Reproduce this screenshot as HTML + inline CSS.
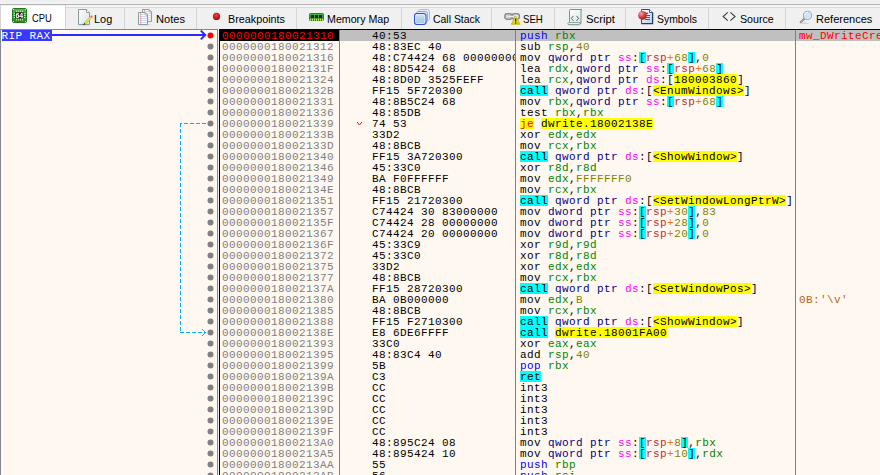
<!DOCTYPE html>
<html lang="en"><head><meta charset="utf-8"><title>x64dbg - CPU</title>
<style>

html,body{margin:0;padding:0}
body{width:880px;height:475px;overflow:hidden;position:relative;background:#f0f0f0;font-family:"Liberation Sans",sans-serif}
.abs{position:absolute}
#tabs{position:absolute;left:0;top:0;width:880px;height:29px}
.tab{position:absolute;top:7px;height:22px;background:#f0f0f0;border-top:1px solid #dadada;border-right:1px solid #d4d4d4;box-sizing:border-box}
.tab.sel{top:5px;height:24px;background:#fff;border-top:none;border-right:1px solid #d4d4d4;border-left:1px solid #d4d4d4}
.tl{position:absolute;font-size:11px;line-height:13px;color:#000;white-space:nowrap;transform-origin:0 0}
.mono{font-family:"Liberation Mono","DejaVu Sans Mono",monospace;font-size:11px;letter-spacing:0.4px;line-height:13px;white-space:pre}
#side{position:absolute;left:0;top:29px;width:218px;height:446px;box-sizing:border-box;background:#fff8f0;border:1px solid #828790;border-bottom:none;overflow:hidden}
#dis{position:absolute;left:219px;top:29px;width:661px;height:446px;background:#fff8f0;overflow:hidden}
.r{position:absolute;left:0;width:661px;height:11px}
.c{position:absolute;top:0;height:11px;clip-path:inset(0 0 -3px 0)}
.c span{display:inline-block;height:11px;vertical-align:top}
.t{position:absolute;top:0;left:0;height:11px}
.vl{position:absolute;top:0;width:1px;height:446px;background:#808080}

</style></head><body>
<div class="abs" style="left:0;top:3px;width:880px;height:1px;background:#f3f3f3"></div>
<div class="abs" style="left:0;top:4px;width:880px;height:1px;background:#b4b4b4"></div>
<div class="abs" style="left:65px;top:5px;width:815px;height:2px;background:#f5f5f5"></div>
<div id="tabs">
<div class="tab sel" style="left:0px;width:66px"></div>
<div class="tab" style="left:66px;width:59px"></div>
<div class="tab" style="left:125px;width:72px"></div>
<div class="tab" style="left:197px;width:100px"></div>
<div class="tab" style="left:297px;width:105px"></div>
<div class="tab" style="left:402px;width:90px"></div>
<div class="tab" style="left:492px;width:63px"></div>
<div class="tab" style="left:555px;width:71px"></div>
<div class="tab" style="left:626px;width:83px"></div>
<div class="tab" style="left:709px;width:77px"></div>
<div class="tab" style="left:786px;width:115px"></div>
<div class="tl" style="left:31.60px;top:12.00px;transform:scaleX(0.8522)">CPU</div>
<div class="tl" style="left:94.40px;top:13.00px;transform:scaleX(0.9913)">Log</div>
<div class="tl" style="left:155.60px;top:13.00px;transform:scaleX(1.0087)">Notes</div>
<div class="tl" style="left:227.60px;top:13.00px;transform:scaleX(0.9812)">Breakpoints</div>
<div class="tl" style="left:327.20px;top:13.00px;transform:scaleX(0.9690)">Memory Map</div>
<div class="tl" style="left:433.00px;top:13.00px;transform:scaleX(0.9489)">Call Stack</div>
<div class="tl" style="left:522.80px;top:13.00px;transform:scaleX(0.8751)">SEH</div>
<div class="tl" style="left:585.50px;top:13.00px;transform:scaleX(1.0240)">Script</div>
<div class="tl" style="left:656.70px;top:13.00px;transform:scaleX(0.9458)">Symbols</div>
<div class="tl" style="left:739.50px;top:13.00px;transform:scaleX(0.9696)">Source</div>
<div class="tl" style="left:816.40px;top:13.00px;transform:scaleX(1.0024)">References</div>
<div class="abs" style="left:1px;top:5px;width:64px;height:1px;background:#f2f2f2"></div>
<svg class="abs" style="left:0;top:0;will-change:transform" width="880" height="29" viewBox="0 0 880 29">
<defs>
<linearGradient id="gPage" x1="0" y1="0" x2="1" y2="1"><stop offset="0" stop-color="#ffffff"/><stop offset="1" stop-color="#d3e6e6"/></linearGradient>
<linearGradient id="gBlue" x1="0" y1="0" x2="0" y2="1"><stop offset="0" stop-color="#d4e2f4"/><stop offset="1" stop-color="#9dbce2"/></linearGradient>
<linearGradient id="gDoc" x1="0" y1="0" x2="1" y2="1"><stop offset="0" stop-color="#ffffff"/><stop offset="1" stop-color="#bccdee"/></linearGradient>
<radialGradient id="gRed" cx="0.35" cy="0.3" r="0.75"><stop offset="0" stop-color="#f2a7a0"/><stop offset="0.55" stop-color="#d2403c"/><stop offset="1" stop-color="#a81c1c"/></radialGradient>
<radialGradient id="gBp" cx="0.45" cy="0.35" r="0.7"><stop offset="0" stop-color="#e44a4a"/><stop offset="0.6" stop-color="#d01212"/><stop offset="1" stop-color="#9c0c0c"/></radialGradient>
<linearGradient id="gGreen" x1="0" y1="0" x2="0" y2="1"><stop offset="0" stop-color="#4cb64c"/><stop offset="1" stop-color="#1f8a1f"/></linearGradient>
<linearGradient id="gWarn" x1="0" y1="0" x2="0" y2="1"><stop offset="0" stop-color="#f6ee7a"/><stop offset="1" stop-color="#d6c80a"/></linearGradient>
</defs>
<!-- CPU chip -->
<g>
<rect x="12.5" y="8.5" width="14" height="14" rx="1.2" fill="url(#gGreen)" stroke="#1c7a22" stroke-width="1"/>
<g stroke="#e8d98a" stroke-width="1">
<path d="M16.5 10.5v2M18.5 10.5v2M20.5 10.5v2M22.5 10.5v2M16.5 18.5v2M18.5 18.5v2M20.5 18.5v2M22.5 18.5v2"/>
<path d="M13.5 13.5h2M13.5 15.5h2M13.5 17.5h2M23.5 13.5h2M23.5 15.5h2M23.5 17.5h2"/>
</g>
<g fill="#e8d98a"><rect x="13" y="9" width="1" height="1"/><rect x="25" y="9" width="1" height="1"/><rect x="13" y="21" width="1" height="1"/><rect x="25" y="21" width="1" height="1"/></g>
<rect x="15" y="12.3" width="8.700" height="6.200" rx="0.800" fill="#222222"/>
<text x="19.35" y="17.9" font-family="Liberation Sans, sans-serif" font-size="7" font-weight="bold" fill="#ffffff" text-anchor="middle">64</text>
</g>
<!-- Log: page + pencil -->
<g>
<ellipse cx="84" cy="24.700" rx="6.500" ry="0.800" fill="#000" opacity="0.160"/>
<path d="M78.500 9.500H86.500L89.500 12.500V24.500H78.500Z" fill="url(#gPage)" stroke="#8b9c9c" stroke-width="1"/>
<path d="M86.500 9.500V12.500H89.500" fill="#f8fbfb" stroke="#8b9c9c" stroke-width="0.900"/>
<path d="M84.100 22.900L89.900 17.100L91.300 18.500L85.500 24.300Z" fill="#ecd94e" stroke="#a8952a" stroke-width="0.450"/>
<path d="M84.800 23.600L90.600 17.800" stroke="#f7ee9a" stroke-width="0.500" stroke-dasharray="0.800 0.600"/>
<path d="M83.100 24.900L84.100 22.900L85.500 24.300Z" fill="#1a1a1a"/>
<path d="M89.900 17.100L90.500 16.500L91.900 17.900L91.300 18.500Z" fill="#f4f4f4"/>
<circle cx="91.500" cy="16.700" r="1.150" fill="#e85a66"/>
</g>
<!-- Notes: two pages -->
<g>
<ellipse cx="144.500" cy="24.800" rx="7" ry="0.800" fill="#000" opacity="0.130"/>
<path d="M142.500 9.500H149L151.500 12V21.500H142.500Z" fill="#f6f8fe" stroke="#7d9595" stroke-width="0.900"/>
<g stroke="#d6dcf6" stroke-width="1"><path d="M143.500 11.500h5M143.500 13.500h7.500M143.500 15.500h7.500M143.500 17.500h7.500M143.500 19.500h7.500"/></g>
<path d="M144.500 10v3" stroke="#f2a6a6" stroke-width="1"/>
<path d="M149 9.700V12H151.300Z" fill="#ffffff" stroke="#7d9595" stroke-width="0.600"/>
<path d="M138.500 12.500H145L147.500 15V24.500H138.500Z" fill="#fbfcff" stroke="#7d9595" stroke-width="0.900"/>
<g stroke="#d0d6f5" stroke-width="1"><path d="M139.500 14.500h5M139.500 16.500h7.500M139.500 18.500h7.500M139.500 20.500h7.500M139.500 22.500h7.500"/></g>
<path d="M140.700 13v11" stroke="#f4a0a0" stroke-width="1"/>
<path d="M145 12.700V15H147.300Z" fill="#ffffff" stroke="#7d9595" stroke-width="0.600"/>
</g>
<!-- Breakpoints: red ball -->
<circle cx="216.5" cy="16.4" r="3.6" fill="url(#gBp)"/>
<!-- Memory map: RAM -->
<g>
<rect x="309.500" y="13.5" width="14" height="7" rx="0.8" fill="url(#gGreen)" stroke="#1f8a26" stroke-width="1"/>
<g fill="#2a2230"><rect x="311" y="15" width="3" height="3"/><rect x="315" y="15" width="3" height="3"/><rect x="319" y="15" width="3" height="3"/></g>
<g fill="#eadf7a"><rect x="310" y="18.8" width="1" height="1.8"/><rect x="312" y="18.8" width="1" height="1.8"/><rect x="314" y="18.8" width="1" height="1.8"/><rect x="316" y="18.8" width="1" height="1.8"/><rect x="318" y="18.8" width="1" height="1.8"/><rect x="320" y="18.8" width="1" height="1.8"/><rect x="322" y="18.8" width="1" height="1.8"/></g>
</g>
<!-- Call stack: stacked squares -->
<g>
<rect x="418.500" y="9.500" width="11" height="11" rx="2" fill="#e6effa" stroke="#9fbde4" stroke-width="1"/>
<rect x="416.500" y="11.500" width="11" height="11" rx="2" fill="#dce9f8" stroke="#86abdc" stroke-width="1"/>
<rect x="414.550" y="13.550" width="11.400" height="11" rx="2.200" fill="url(#gBlue)" stroke="#2e52d2" stroke-width="1.100"/>
<rect x="415.700" y="14.700" width="9.100" height="8.700" rx="1.300" fill="none" stroke="#eaf1fb" stroke-width="0.900" opacity="0.850"/>
<path d="M417.500 16.500V21.500H423" fill="none" stroke="#b9cfea" stroke-width="1" opacity="0.800"/>
</g>
<!-- SEH: chain + warning -->
<g>
<rect x="504.800" y="13.800" width="7.600" height="5.400" rx="2.600" fill="none" stroke="#8a8a8a" stroke-width="1.500"/>
<rect x="511.800" y="13.800" width="7.600" height="5.200" rx="2.600" fill="none" stroke="#8a8a8a" stroke-width="1.500"/>
<rect x="506.600" y="15.600" width="8" height="1.800" rx="0.900" fill="#fafafa" stroke="#9a9a9a" stroke-width="0.600"/>
<path d="M515.700 15.800L520.200 24.300H511.200Z" fill="url(#gWarn)" stroke="#c2b40a" stroke-width="0.800" stroke-linejoin="round"/>
<path d="M515.700 18.600v2.900" stroke="#111" stroke-width="1.200"/>
<circle cx="515.700" cy="22.900" r="0.700" fill="#111"/>
</g>
<!-- Script: scroll -->
<g>
<ellipse cx="574.500" cy="24.800" rx="7" ry="0.800" fill="#000" opacity="0.150"/>
<path d="M569.500 10.500Q569.500 9.500 570.800 9.500H582Q581 9.700 581 11V23.500H569.500Z" fill="url(#gPage)" stroke="#7d9393" stroke-width="1"/>
<path d="M567.800 23.600Q567.800 22.600 569.500 22.600H580.500Q580.400 24.600 578.800 24.600H569Q567.800 24.600 567.800 23.600Z" fill="#f6fafa" stroke="#7d9393" stroke-width="0.900"/>
<path d="M573.400 15.900L571.300 18.400L573.400 20.900M576.500 15.900L578.600 18.400L576.500 20.900" fill="none" stroke="#5a5a5a" stroke-width="1"/>
</g>
<!-- Symbols: document + red ball -->
<g>
<path d="M641.500 9.500H649.500L652.500 12.500V23.500H641.500Z" fill="url(#gDoc)" stroke="#31506f" stroke-width="1"/>
<path d="M652.600 12.500V23.600H641.500" fill="none" stroke="#243e5c" stroke-width="1.300"/>
<path d="M649.500 9.500V12.500H652.500" fill="#fff" stroke="#31506f" stroke-width="0.900"/>
<g stroke="#2a56d6" stroke-width="1.100"><path d="M645 13.400h3M645 15.500h5M645 17.500h5M645 19.500h5"/></g>
<circle cx="642.500" cy="15.400" r="4.300" fill="url(#gRed)"/>
</g>
<!-- Source: <> -->
<path d="M727.800 12.300L723.100 16.500L727.800 20.700M730.400 12.300L735.100 16.500L730.400 20.700" fill="none" stroke="#3a3a3a" stroke-width="1.050"/>
<!-- References: magnifier -->
<g>
<ellipse cx="805" cy="23.200" rx="4" ry="0.700" fill="#000" opacity="0.120"/>
<path d="M804.700 18.300L800.700 22.200" stroke="#8e8e8e" stroke-width="2.200" stroke-linecap="round"/>
<path d="M804.300 18.700L801.100 21.800" stroke="#e6e6e6" stroke-width="0.800" stroke-dasharray="0.800 0.800"/>
<circle cx="807.500" cy="15.400" r="4.100" fill="#d3e4f5" stroke="#a3a3a3" stroke-width="1"/>
<path d="M804.800 14.600Q805.500 12.200 808 12" fill="none" stroke="#f4f9fe" stroke-width="1"/>
</g>
</svg>

</div>
<div id="side">
<div class="abs mono" style="left:1px;top:0;height:11px;width:50px;background:#3838ff;color:#fff;text-indent:-0.6px">RIP RAX</div>
<svg class="abs" style="left:-1px;top:-30px" width="218" height="475" viewBox="0 0 218 475"><path d="M52 35H205" stroke="#2a2aff" stroke-width="2" fill="none"/><path d="M200.8 30.6L205.2 35L200.8 39.4" stroke="#2a2aff" stroke-width="2" fill="none"/><g stroke="#00b0ff" stroke-width="1" fill="none" shape-rendering="crispEdges"><path d="M206 123.5H180" stroke-dasharray="4 2"/><path d="M180.5 123V333" stroke-dasharray="4 2"/><path d="M180 332.5H206" stroke-dasharray="4 2"/></g><path d="M202 329L205.5 332.5L202 336" stroke="#00b0ff" stroke-width="1" fill="none"/><circle cx="210.5" cy="35.5" r="3" fill="#ff0000"/><circle cx="210.5" cy="46.5" r="3" fill="#808080"/><circle cx="210.5" cy="57.5" r="3" fill="#808080"/><circle cx="210.5" cy="68.5" r="3" fill="#808080"/><circle cx="210.5" cy="79.5" r="3" fill="#808080"/><circle cx="210.5" cy="90.5" r="3" fill="#808080"/><circle cx="210.5" cy="101.5" r="3" fill="#808080"/><circle cx="210.5" cy="112.5" r="3" fill="#808080"/><circle cx="210.5" cy="123.5" r="3" fill="#808080"/><circle cx="210.5" cy="134.5" r="3" fill="#808080"/><circle cx="210.5" cy="145.5" r="3" fill="#808080"/><circle cx="210.5" cy="156.5" r="3" fill="#808080"/><circle cx="210.5" cy="167.5" r="3" fill="#808080"/><circle cx="210.5" cy="178.5" r="3" fill="#808080"/><circle cx="210.5" cy="189.5" r="3" fill="#808080"/><circle cx="210.5" cy="200.5" r="3" fill="#808080"/><circle cx="210.5" cy="211.5" r="3" fill="#808080"/><circle cx="210.5" cy="222.5" r="3" fill="#808080"/><circle cx="210.5" cy="233.5" r="3" fill="#808080"/><circle cx="210.5" cy="244.5" r="3" fill="#808080"/><circle cx="210.5" cy="255.5" r="3" fill="#808080"/><circle cx="210.5" cy="266.5" r="3" fill="#808080"/><circle cx="210.5" cy="277.5" r="3" fill="#808080"/><circle cx="210.5" cy="288.5" r="3" fill="#808080"/><circle cx="210.5" cy="299.5" r="3" fill="#808080"/><circle cx="210.5" cy="310.5" r="3" fill="#808080"/><circle cx="210.5" cy="321.5" r="3" fill="#808080"/><circle cx="210.5" cy="332.5" r="3" fill="#808080"/><circle cx="210.5" cy="343.5" r="3" fill="#808080"/><circle cx="210.5" cy="354.5" r="3" fill="#808080"/><circle cx="210.5" cy="365.5" r="3" fill="#808080"/><circle cx="210.5" cy="376.5" r="3" fill="#808080"/><circle cx="210.5" cy="387.5" r="3" fill="#808080"/><circle cx="210.5" cy="398.5" r="3" fill="#808080"/><circle cx="210.5" cy="409.5" r="3" fill="#808080"/><circle cx="210.5" cy="420.5" r="3" fill="#808080"/><circle cx="210.5" cy="431.5" r="3" fill="#808080"/><circle cx="210.5" cy="442.5" r="3" fill="#808080"/><circle cx="210.5" cy="453.5" r="3" fill="#808080"/><circle cx="210.5" cy="464.5" r="3" fill="#808080"/><circle cx="210.5" cy="475.5" r="3" fill="#808080"/></svg>
</div>
<div id="dis">
<div class="r mono" style="top:1px;background:#c0c0c0">
<div class="c" style="left:0;width:120px;background:#000;color:#f00"><span class="t" style="left:3px">0000000180021310</span></div>
<div class="c" style="left:121px;width:175px"><span class="t" style="left:32px">40:53</span></div>
<div class="c" style="left:297px;width:279px"><span class="t" style="left:4px"><span style="color:#0000ff">push</span> <span style="color:#008300">rbx</span></span></div>
<div class="c" style="left:577px;width:84px;color:#ff0000"><span class="t" style="left:3px">mw_DWriteCre</span></div>
</div>
<div class="r mono" style="top:12px">
<div class="c" style="left:1px;width:119px;color:#808080"><span class="t" style="left:2px">0000000180021312</span></div>
<div class="c" style="left:121px;width:175px"><span class="t" style="left:32px">48:83EC 40</span></div>
<div class="c" style="left:297px;width:279px"><span class="t" style="left:4px">sub <span style="color:#008300">rsp</span>,<span style="color:#828200">40</span></span></div>
</div>
<div class="r mono" style="top:23px">
<div class="c" style="left:1px;width:119px;color:#808080"><span class="t" style="left:2px">0000000180021316</span></div>
<div class="c" style="left:121px;width:175px"><span class="t" style="left:32px">48:C74424 68 00000000</span></div>
<div class="c" style="left:297px;width:279px"><span class="t" style="left:4px">mov <span style="color:#000080">qword ptr</span> <span style="color:#ff00ff">ss</span>:<span style="background:#00ffff">[</span><span style="color:#b03434">rsp</span><span style="color:#f27711">+</span><span style="color:#828200">68</span><span style="background:#00ffff">]</span>,<span style="color:#828200">0</span></span></div>
</div>
<div class="r mono" style="top:34px">
<div class="c" style="left:1px;width:119px;color:#808080"><span class="t" style="left:2px">000000018002131F</span></div>
<div class="c" style="left:121px;width:175px"><span class="t" style="left:32px">48:8D5424 68</span></div>
<div class="c" style="left:297px;width:279px"><span class="t" style="left:4px">lea <span style="color:#008300">rdx</span>,<span style="color:#000080">qword ptr</span> <span style="color:#ff00ff">ss</span>:<span style="background:#00ffff">[</span><span style="color:#b03434">rsp</span><span style="color:#f27711">+</span><span style="color:#828200">68</span><span style="background:#00ffff">]</span></span></div>
</div>
<div class="r mono" style="top:45px">
<div class="c" style="left:1px;width:119px;color:#808080"><span class="t" style="left:2px">0000000180021324</span></div>
<div class="c" style="left:121px;width:175px"><span class="t" style="left:32px">48:8D0D 3525FEFF</span></div>
<div class="c" style="left:297px;width:279px"><span class="t" style="left:4px">lea <span style="color:#008300">rcx</span>,<span style="color:#000080">qword ptr</span> <span style="color:#ff00ff">ds</span>:[<span style="background:#ffff00">180003860</span>]</span></div>
</div>
<div class="r mono" style="top:56px">
<div class="c" style="left:1px;width:119px;color:#808080"><span class="t" style="left:2px">000000018002132B</span></div>
<div class="c" style="left:121px;width:175px"><span class="t" style="left:32px">FF15 5F720300</span></div>
<div class="c" style="left:297px;width:279px"><span class="t" style="left:4px"><span style="background:#00ffff">call</span> <span style="color:#000080">qword ptr</span> <span style="color:#ff00ff">ds</span>:[<span style="background:#ffff00">&lt;EnumWindows&gt;</span>]</span></div>
</div>
<div class="r mono" style="top:67px">
<div class="c" style="left:1px;width:119px;color:#808080"><span class="t" style="left:2px">0000000180021331</span></div>
<div class="c" style="left:121px;width:175px"><span class="t" style="left:32px">48:8B5C24 68</span></div>
<div class="c" style="left:297px;width:279px"><span class="t" style="left:4px">mov <span style="color:#008300">rbx</span>,<span style="color:#000080">qword ptr</span> <span style="color:#ff00ff">ss</span>:<span style="background:#00ffff">[</span><span style="color:#b03434">rsp</span><span style="color:#f27711">+</span><span style="color:#828200">68</span><span style="background:#00ffff">]</span></span></div>
</div>
<div class="r mono" style="top:78px">
<div class="c" style="left:1px;width:119px;color:#808080"><span class="t" style="left:2px">0000000180021336</span></div>
<div class="c" style="left:121px;width:175px"><span class="t" style="left:32px">48:85DB</span></div>
<div class="c" style="left:297px;width:279px"><span class="t" style="left:4px">test <span style="color:#008300">rbx</span>,<span style="color:#008300">rbx</span></span></div>
</div>
<div class="r mono" style="top:89px">
<div class="c" style="left:1px;width:119px;color:#808080"><span class="t" style="left:2px">0000000180021339</span></div>
<div class="c" style="left:121px;width:175px"><span class="t" style="left:32px">74 53</span></div>
<div class="c" style="left:297px;width:279px"><span class="t" style="left:4px"><span style="color:#ff0000;background:#ffff00">je</span> <span style="background:#ffff00">dwrite.18002138E</span></span></div>
</div>
<div class="r mono" style="top:100px">
<div class="c" style="left:1px;width:119px;color:#808080"><span class="t" style="left:2px">000000018002133B</span></div>
<div class="c" style="left:121px;width:175px"><span class="t" style="left:32px">33D2</span></div>
<div class="c" style="left:297px;width:279px"><span class="t" style="left:4px">xor <span style="color:#008300">edx</span>,<span style="color:#008300">edx</span></span></div>
</div>
<div class="r mono" style="top:111px">
<div class="c" style="left:1px;width:119px;color:#808080"><span class="t" style="left:2px">000000018002133D</span></div>
<div class="c" style="left:121px;width:175px"><span class="t" style="left:32px">48:8BCB</span></div>
<div class="c" style="left:297px;width:279px"><span class="t" style="left:4px">mov <span style="color:#008300">rcx</span>,<span style="color:#008300">rbx</span></span></div>
</div>
<div class="r mono" style="top:122px">
<div class="c" style="left:1px;width:119px;color:#808080"><span class="t" style="left:2px">0000000180021340</span></div>
<div class="c" style="left:121px;width:175px"><span class="t" style="left:32px">FF15 3A720300</span></div>
<div class="c" style="left:297px;width:279px"><span class="t" style="left:4px"><span style="background:#00ffff">call</span> <span style="color:#000080">qword ptr</span> <span style="color:#ff00ff">ds</span>:[<span style="background:#ffff00">&lt;ShowWindow&gt;</span>]</span></div>
</div>
<div class="r mono" style="top:133px">
<div class="c" style="left:1px;width:119px;color:#808080"><span class="t" style="left:2px">0000000180021346</span></div>
<div class="c" style="left:121px;width:175px"><span class="t" style="left:32px">45:33C0</span></div>
<div class="c" style="left:297px;width:279px"><span class="t" style="left:4px">xor <span style="color:#008300">r8d</span>,<span style="color:#008300">r8d</span></span></div>
</div>
<div class="r mono" style="top:144px">
<div class="c" style="left:1px;width:119px;color:#808080"><span class="t" style="left:2px">0000000180021349</span></div>
<div class="c" style="left:121px;width:175px"><span class="t" style="left:32px">BA F0FFFFFF</span></div>
<div class="c" style="left:297px;width:279px"><span class="t" style="left:4px">mov <span style="color:#008300">edx</span>,<span style="color:#828200">FFFFFFF0</span></span></div>
</div>
<div class="r mono" style="top:155px">
<div class="c" style="left:1px;width:119px;color:#808080"><span class="t" style="left:2px">000000018002134E</span></div>
<div class="c" style="left:121px;width:175px"><span class="t" style="left:32px">48:8BCB</span></div>
<div class="c" style="left:297px;width:279px"><span class="t" style="left:4px">mov <span style="color:#008300">rcx</span>,<span style="color:#008300">rbx</span></span></div>
</div>
<div class="r mono" style="top:166px">
<div class="c" style="left:1px;width:119px;color:#808080"><span class="t" style="left:2px">0000000180021351</span></div>
<div class="c" style="left:121px;width:175px"><span class="t" style="left:32px">FF15 21720300</span></div>
<div class="c" style="left:297px;width:279px"><span class="t" style="left:4px"><span style="background:#00ffff">call</span> <span style="color:#000080">qword ptr</span> <span style="color:#ff00ff">ds</span>:[<span style="background:#ffff00">&lt;SetWindowLongPtrW&gt;</span>]</span></div>
</div>
<div class="r mono" style="top:177px">
<div class="c" style="left:1px;width:119px;color:#808080"><span class="t" style="left:2px">0000000180021357</span></div>
<div class="c" style="left:121px;width:175px"><span class="t" style="left:32px">C74424 30 83000000</span></div>
<div class="c" style="left:297px;width:279px"><span class="t" style="left:4px">mov <span style="color:#000080">dword ptr</span> <span style="color:#ff00ff">ss</span>:<span style="background:#00ffff">[</span><span style="color:#b03434">rsp</span><span style="color:#f27711">+</span><span style="color:#828200">30</span><span style="background:#00ffff">]</span>,<span style="color:#828200">83</span></span></div>
</div>
<div class="r mono" style="top:188px">
<div class="c" style="left:1px;width:119px;color:#808080"><span class="t" style="left:2px">000000018002135F</span></div>
<div class="c" style="left:121px;width:175px"><span class="t" style="left:32px">C74424 28 00000000</span></div>
<div class="c" style="left:297px;width:279px"><span class="t" style="left:4px">mov <span style="color:#000080">dword ptr</span> <span style="color:#ff00ff">ss</span>:<span style="background:#00ffff">[</span><span style="color:#b03434">rsp</span><span style="color:#f27711">+</span><span style="color:#828200">28</span><span style="background:#00ffff">]</span>,<span style="color:#828200">0</span></span></div>
</div>
<div class="r mono" style="top:199px">
<div class="c" style="left:1px;width:119px;color:#808080"><span class="t" style="left:2px">0000000180021367</span></div>
<div class="c" style="left:121px;width:175px"><span class="t" style="left:32px">C74424 20 00000000</span></div>
<div class="c" style="left:297px;width:279px"><span class="t" style="left:4px">mov <span style="color:#000080">dword ptr</span> <span style="color:#ff00ff">ss</span>:<span style="background:#00ffff">[</span><span style="color:#b03434">rsp</span><span style="color:#f27711">+</span><span style="color:#828200">20</span><span style="background:#00ffff">]</span>,<span style="color:#828200">0</span></span></div>
</div>
<div class="r mono" style="top:210px">
<div class="c" style="left:1px;width:119px;color:#808080"><span class="t" style="left:2px">000000018002136F</span></div>
<div class="c" style="left:121px;width:175px"><span class="t" style="left:32px">45:33C9</span></div>
<div class="c" style="left:297px;width:279px"><span class="t" style="left:4px">xor <span style="color:#008300">r9d</span>,<span style="color:#008300">r9d</span></span></div>
</div>
<div class="r mono" style="top:221px">
<div class="c" style="left:1px;width:119px;color:#808080"><span class="t" style="left:2px">0000000180021372</span></div>
<div class="c" style="left:121px;width:175px"><span class="t" style="left:32px">45:33C0</span></div>
<div class="c" style="left:297px;width:279px"><span class="t" style="left:4px">xor <span style="color:#008300">r8d</span>,<span style="color:#008300">r8d</span></span></div>
</div>
<div class="r mono" style="top:232px">
<div class="c" style="left:1px;width:119px;color:#808080"><span class="t" style="left:2px">0000000180021375</span></div>
<div class="c" style="left:121px;width:175px"><span class="t" style="left:32px">33D2</span></div>
<div class="c" style="left:297px;width:279px"><span class="t" style="left:4px">xor <span style="color:#008300">edx</span>,<span style="color:#008300">edx</span></span></div>
</div>
<div class="r mono" style="top:243px">
<div class="c" style="left:1px;width:119px;color:#808080"><span class="t" style="left:2px">0000000180021377</span></div>
<div class="c" style="left:121px;width:175px"><span class="t" style="left:32px">48:8BCB</span></div>
<div class="c" style="left:297px;width:279px"><span class="t" style="left:4px">mov <span style="color:#008300">rcx</span>,<span style="color:#008300">rbx</span></span></div>
</div>
<div class="r mono" style="top:254px">
<div class="c" style="left:1px;width:119px;color:#808080"><span class="t" style="left:2px">000000018002137A</span></div>
<div class="c" style="left:121px;width:175px"><span class="t" style="left:32px">FF15 28720300</span></div>
<div class="c" style="left:297px;width:279px"><span class="t" style="left:4px"><span style="background:#00ffff">call</span> <span style="color:#000080">qword ptr</span> <span style="color:#ff00ff">ds</span>:[<span style="background:#ffff00">&lt;SetWindowPos&gt;</span>]</span></div>
</div>
<div class="r mono" style="top:265px">
<div class="c" style="left:1px;width:119px;color:#808080"><span class="t" style="left:2px">0000000180021380</span></div>
<div class="c" style="left:121px;width:175px"><span class="t" style="left:32px">BA 0B000000</span></div>
<div class="c" style="left:297px;width:279px"><span class="t" style="left:4px">mov <span style="color:#008300">edx</span>,<span style="color:#828200">B</span></span></div>
<div class="c" style="left:577px;width:84px;color:#b5651d"><span class="t" style="left:3px">0B:'\v'</span></div>
</div>
<div class="r mono" style="top:276px">
<div class="c" style="left:1px;width:119px;color:#808080"><span class="t" style="left:2px">0000000180021385</span></div>
<div class="c" style="left:121px;width:175px"><span class="t" style="left:32px">48:8BCB</span></div>
<div class="c" style="left:297px;width:279px"><span class="t" style="left:4px">mov <span style="color:#008300">rcx</span>,<span style="color:#008300">rbx</span></span></div>
</div>
<div class="r mono" style="top:287px">
<div class="c" style="left:1px;width:119px;color:#808080"><span class="t" style="left:2px">0000000180021388</span></div>
<div class="c" style="left:121px;width:175px"><span class="t" style="left:32px">FF15 F2710300</span></div>
<div class="c" style="left:297px;width:279px"><span class="t" style="left:4px"><span style="background:#00ffff">call</span> <span style="color:#000080">qword ptr</span> <span style="color:#ff00ff">ds</span>:[<span style="background:#ffff00">&lt;ShowWindow&gt;</span>]</span></div>
</div>
<div class="r mono" style="top:298px">
<div class="c" style="left:1px;width:119px;color:#808080"><span class="t" style="left:2px">000000018002138E</span></div>
<div class="c" style="left:121px;width:175px"><span class="t" style="left:32px">E8 6DE6FFFF</span></div>
<div class="c" style="left:297px;width:279px"><span class="t" style="left:4px"><span style="background:#00ffff">call</span> <span style="background:#ffff00">dwrite.18001FA00</span></span></div>
</div>
<div class="r mono" style="top:309px">
<div class="c" style="left:1px;width:119px;color:#808080"><span class="t" style="left:2px">0000000180021393</span></div>
<div class="c" style="left:121px;width:175px"><span class="t" style="left:32px">33C0</span></div>
<div class="c" style="left:297px;width:279px"><span class="t" style="left:4px">xor <span style="color:#008300">eax</span>,<span style="color:#008300">eax</span></span></div>
</div>
<div class="r mono" style="top:320px">
<div class="c" style="left:1px;width:119px;color:#808080"><span class="t" style="left:2px">0000000180021395</span></div>
<div class="c" style="left:121px;width:175px"><span class="t" style="left:32px">48:83C4 40</span></div>
<div class="c" style="left:297px;width:279px"><span class="t" style="left:4px">add <span style="color:#008300">rsp</span>,<span style="color:#828200">40</span></span></div>
</div>
<div class="r mono" style="top:331px">
<div class="c" style="left:1px;width:119px;color:#808080"><span class="t" style="left:2px">0000000180021399</span></div>
<div class="c" style="left:121px;width:175px"><span class="t" style="left:32px">5B</span></div>
<div class="c" style="left:297px;width:279px"><span class="t" style="left:4px"><span style="color:#0000ff">pop</span> <span style="color:#008300">rbx</span></span></div>
</div>
<div class="r mono" style="top:342px">
<div class="c" style="left:1px;width:119px;color:#808080"><span class="t" style="left:2px">000000018002139A</span></div>
<div class="c" style="left:121px;width:175px"><span class="t" style="left:32px">C3</span></div>
<div class="c" style="left:297px;width:279px"><span class="t" style="left:4px"><span style="background:#00ffff">ret</span></span></div>
</div>
<div class="r mono" style="top:353px">
<div class="c" style="left:1px;width:119px;color:#808080"><span class="t" style="left:2px">000000018002139B</span></div>
<div class="c" style="left:121px;width:175px"><span class="t" style="left:32px">CC</span></div>
<div class="c" style="left:297px;width:279px"><span class="t" style="left:4px">int3</span></div>
</div>
<div class="r mono" style="top:364px">
<div class="c" style="left:1px;width:119px;color:#808080"><span class="t" style="left:2px">000000018002139C</span></div>
<div class="c" style="left:121px;width:175px"><span class="t" style="left:32px">CC</span></div>
<div class="c" style="left:297px;width:279px"><span class="t" style="left:4px">int3</span></div>
</div>
<div class="r mono" style="top:375px">
<div class="c" style="left:1px;width:119px;color:#808080"><span class="t" style="left:2px">000000018002139D</span></div>
<div class="c" style="left:121px;width:175px"><span class="t" style="left:32px">CC</span></div>
<div class="c" style="left:297px;width:279px"><span class="t" style="left:4px">int3</span></div>
</div>
<div class="r mono" style="top:386px">
<div class="c" style="left:1px;width:119px;color:#808080"><span class="t" style="left:2px">000000018002139E</span></div>
<div class="c" style="left:121px;width:175px"><span class="t" style="left:32px">CC</span></div>
<div class="c" style="left:297px;width:279px"><span class="t" style="left:4px">int3</span></div>
</div>
<div class="r mono" style="top:397px">
<div class="c" style="left:1px;width:119px;color:#808080"><span class="t" style="left:2px">000000018002139F</span></div>
<div class="c" style="left:121px;width:175px"><span class="t" style="left:32px">CC</span></div>
<div class="c" style="left:297px;width:279px"><span class="t" style="left:4px">int3</span></div>
</div>
<div class="r mono" style="top:408px">
<div class="c" style="left:1px;width:119px;color:#808080"><span class="t" style="left:2px">00000001800213A0</span></div>
<div class="c" style="left:121px;width:175px"><span class="t" style="left:32px">48:895C24 08</span></div>
<div class="c" style="left:297px;width:279px"><span class="t" style="left:4px">mov <span style="color:#000080">qword ptr</span> <span style="color:#ff00ff">ss</span>:<span style="background:#00ffff">[</span><span style="color:#b03434">rsp</span><span style="color:#f27711">+</span><span style="color:#828200">8</span><span style="background:#00ffff">]</span>,<span style="color:#008300">rbx</span></span></div>
</div>
<div class="r mono" style="top:419px">
<div class="c" style="left:1px;width:119px;color:#808080"><span class="t" style="left:2px">00000001800213A5</span></div>
<div class="c" style="left:121px;width:175px"><span class="t" style="left:32px">48:895424 10</span></div>
<div class="c" style="left:297px;width:279px"><span class="t" style="left:4px">mov <span style="color:#000080">qword ptr</span> <span style="color:#ff00ff">ss</span>:<span style="background:#00ffff">[</span><span style="color:#b03434">rsp</span><span style="color:#f27711">+</span><span style="color:#828200">10</span><span style="background:#00ffff">]</span>,<span style="color:#008300">rdx</span></span></div>
</div>
<div class="r mono" style="top:430px">
<div class="c" style="left:1px;width:119px;color:#808080"><span class="t" style="left:2px">00000001800213AA</span></div>
<div class="c" style="left:121px;width:175px"><span class="t" style="left:32px">55</span></div>
<div class="c" style="left:297px;width:279px"><span class="t" style="left:4px"><span style="color:#0000ff">push</span> <span style="color:#008300">rbp</span></span></div>
</div>
<div class="r mono" style="top:441px">
<div class="c" style="left:1px;width:119px;color:#808080"><span class="t" style="left:2px">00000001800213AB</span></div>
<div class="c" style="left:121px;width:175px"><span class="t" style="left:32px">56</span></div>
<div class="c" style="left:297px;width:279px"><span class="t" style="left:4px"><span style="color:#0000ff">push</span> <span style="color:#008300">rsi</span></span></div>
</div>
<div class="vl" style="left:0;background:#000"></div>
<div class="vl" style="left:120px"></div>
<div class="vl" style="left:296px"></div>
<div class="vl" style="left:576px"></div>
<div class="abs" style="left:0;top:0;width:661px;height:1px;background:#000"></div>
<svg class="abs" style="left:0;top:0" width="661" height="446"><path d="M138 93L140.5 96L143 93" stroke="#ff0000" stroke-width="1" fill="none"/></svg>
</div>
</body></html>
